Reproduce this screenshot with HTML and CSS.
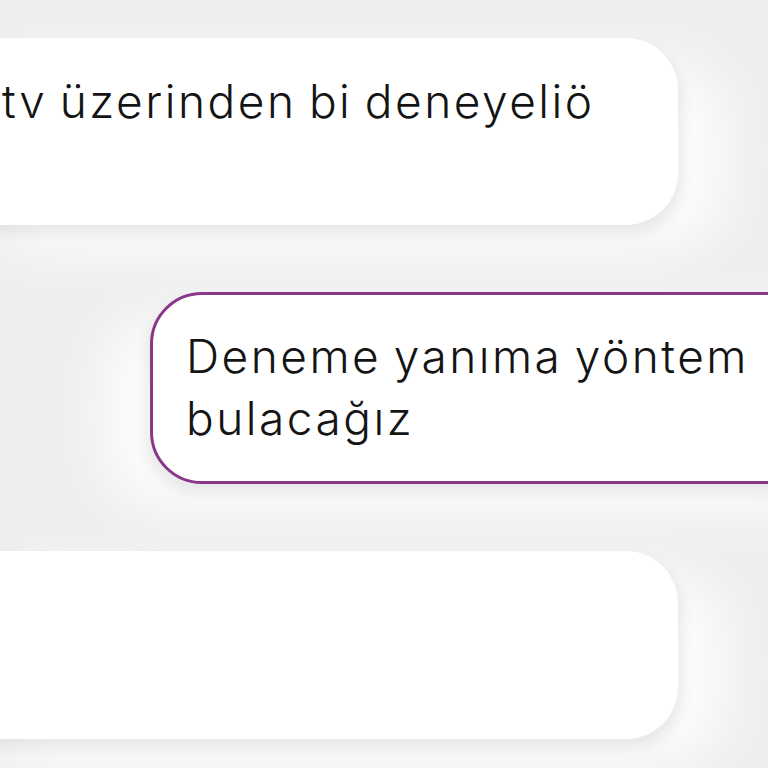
FILE: index.html
```html
<!DOCTYPE html>
<html lang="tr">
<head>
    <meta charset="UTF-8">
    <meta name="viewport" content="width=device-width, initial-scale=1.0">
    <title>Sohbet</title>
    <link rel="stylesheet" href="styles.css">
</head>
<body>
    <!-- mesaj listesi -->
    <main class="thread">
        <div class="bubble bubble-in">
            <p class="bubble-text">tv üzerinden bi deneyeliö</p>
        </div>

        <div class="bubble bubble-out">
            <p class="bubble-text">Deneme yanıma yöntem<br>bulacağız</p>
        </div>

        <div class="bubble bubble-in bubble-empty"></div>
    </main>
</body>
</html>
```

FILE: styles.css
```css
/* temel */
* {
    margin: 0;
    padding: 0;
    box-sizing: border-box;
}

body {
    background: #eeeeee;
    font-family: Inter, 'Noto Sans', sans-serif;
    color: #141414;
    overflow: hidden;
    height: 768px;
}

/* mesaj listesi */
.thread {
    display: flex;
    flex-direction: column;
    gap: 67px;
    padding-top: 38px;
}

.bubble {
    background: #fff;
    border-radius: 52px;
}

.bubble-text {
    font-size: 46px;
    font-weight: 300;
    line-height: 62px;
    letter-spacing: 2.5px;
    word-spacing: -3px;
    white-space: nowrap;
}

/* gelen mesaj: sol kenar ekran dışında */
.bubble-in {
    width: 738px;
    height: 187px;
    margin-left: -60px;
    padding: 32px 0 0 62px;
    box-shadow: 4px 8px 14px rgba(0, 0, 0, 0.08),
                46px 24px 60px rgba(255, 255, 255, 0.9);
}

/* giden mesaj: sağ kenar ekran dışında */
.bubble-out {
    height: 192px;
    margin-left: 150px;
    margin-right: -120px;
    padding: 30px 0 0 33px;
    border: 3px solid #8c3689;
    box-shadow: -4px 8px 14px rgba(0, 0, 0, 0.08),
                -46px 24px 60px rgba(255, 255, 255, 0.9);
}

.bubble-empty {
    height: 188px;
}
```
